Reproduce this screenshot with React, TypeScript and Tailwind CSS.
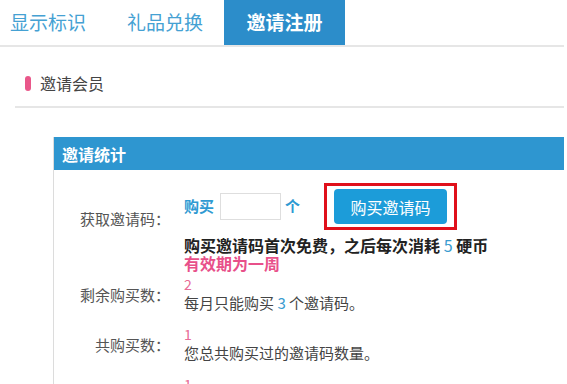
import React from "react";

const font = {
  fontFamily: '"Noto Sans CJK SC", "Liberation Sans", sans-serif',
};

const tabs = [
  { label: "显示标识", className: "pl-[10px] pr-[41px]" },
  { label: "礼品兑换", className: "pr-[21px]" },
];

function Tabs() {
  return (
    <div className="flex h-[47px] w-[564px] border-b-2 border-[#e6e6e6]">
      {tabs.map((tab) => (
        <div
          key={tab.label}
          className={`flex items-center text-[19px] text-[#45a1d3] ${tab.className}`}
        >
          {tab.label}
        </div>
      ))}
      <div className="flex w-[121px] items-center justify-center bg-[#2c8dca] text-[19px] font-bold text-white">
        邀请注册
      </div>
    </div>
  );
}

function SectionTitle() {
  return (
    <div className="ml-[15px] flex h-[61px] w-[549px] items-center border-b-2 border-[#e6e6e6] pl-[10px] pt-[13px]">
      <span className="h-[15px] w-[6px] rounded-sm bg-[#e9578a]" />
      <span className="ml-[9px] text-[16px] text-[#444]">邀请会员</span>
    </div>
  );
}

function StatRow({
  label,
  value,
  note,
}: {
  label: string;
  value: string;
  note: React.ReactNode;
}) {
  return (
    <div className="flex items-center">
      <div className="w-[116px] text-right text-[15px] text-[#555]">{label}</div>
      <div className="ml-[14px] flex flex-col">
        <span className="text-[14px] leading-[14px] text-[#e86a96]">{value}</span>
        <span className="mt-[2px] text-[15px] leading-[20px] text-[#444]">{note}</span>
      </div>
    </div>
  );
}

function InvitePanel() {
  return (
    <div className="ml-[53px] mt-[29px] w-[511px] border-l border-[#dcdcdc]">
      <div className="flex h-[33px] items-center bg-[#2e96d0] pl-[8px] text-[16px] font-bold text-white">
        邀请统计
      </div>
      <div className="flex flex-col pt-[13px]">
        {/* 获取邀请码 */}
        <div className="flex items-start">
          <div className="w-[116px] pt-[25px] text-right text-[15px] text-[#555]">
            获取邀请码：
          </div>
          <div className="ml-[14px] flex flex-col">
            <div className="flex h-[47px] items-center">
              <span className="text-[15px] font-bold text-[#2f9ad2]">购买</span>
              <input
                type="text"
                className="ml-[6px] h-[27px] w-[61px] border border-[#dedede] bg-white"
              />
              <span className="ml-[4px] text-[15px] font-bold text-[#2f9ad2]">个</span>
              <div className="ml-[24px] flex h-[47px] w-[133px] items-center justify-center border-[3px] border-[#e0101b]">
                <button className="h-[35px] w-[113px] rounded-[4px] bg-[#1c9cd9] text-[16px] text-white">
                  购买邀请码
                </button>
              </div>
            </div>
            <div className="mt-[6px] text-[16px] font-bold leading-[18px] text-[#222]">
              购买邀请码首次免费，之后每次消耗{" "}
              <span className="font-normal text-[#3a9bd0]">5</span> 硬币
            </div>
            <div className="text-[16px] font-bold leading-[18px] text-[#e8508a]">
              有效期为一周
            </div>
          </div>
        </div>

        <div className="mt-[5px]">
          <StatRow
            label="剩余购买数："
            value="2"
            note={
              <>
                每月只能购买 <span className="text-[#3a9bd0]">3</span> 个邀请码。
              </>
            }
          />
        </div>
        <div className="mt-[14px]">
          <StatRow label="共购买数：" value="1" note="您总共购买过的邀请码数量。" />
        </div>
        <div className="mt-[14px]">
          <StatRow label="已邀请人数：" value="1" note="您已成功邀请的会员数量。" />
        </div>
      </div>
    </div>
  );
}

export default function App() {
  return (
    <div className="h-[384px] w-[567px] overflow-hidden bg-white" style={font}>
      <Tabs />
      <SectionTitle />
      <InvitePanel />
    </div>
  );
}
